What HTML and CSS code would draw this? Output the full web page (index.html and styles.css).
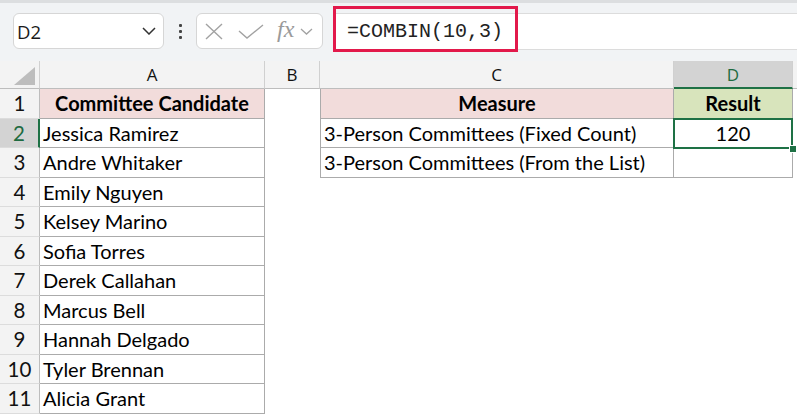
FILE: index.html
```html
<!DOCTYPE html>
<html>
<head>
<meta charset="utf-8">
<link rel="stylesheet" href="styles.css">
</head>
<body>
<div class="toolbar">
  <div class="namebox">
    <span class="nb-text">D2</span>
    <svg class="nb-chev" width="14" height="8" viewBox="0 0 14 8"><polyline points="1,1 7,7 13,1" fill="none" stroke="#333" stroke-width="1.5"/></svg>
  </div>
  <div class="vdots"><i></i><i></i><i></i></div>
  <div class="fbtns">
    <svg width="18" height="17" viewBox="0 0 18 17"><path d="M1 1 L17 16 M17 1 L1 16" stroke="#a2a2a2" stroke-width="1.4" fill="none"/></svg>
    <svg width="26" height="15" viewBox="0 0 26 15"><polyline points="1,7 9,14 25,1" fill="none" stroke="#a2a2a2" stroke-width="1.4"/></svg>
    <span class="fx">fx</span>
    <svg width="13" height="7" viewBox="0 0 13 7"><polyline points="1,1 6.5,6 12,1" fill="none" stroke="#a2a2a2" stroke-width="1.3"/></svg>
  </div>
  <div class="formula">
    <span class="ftext">=COMBIN(10,3)</span>
    <div class="hl"></div>
  </div>
</div>
<div class="sheet">
  <div class="ch corner"><svg width="21" height="18" viewBox="0 0 21 18"><polygon points="21,0 21,18 0,18" fill="#bdbdbd"/></svg></div>
  <div class="ch">A</div>
  <div class="ch">B</div>
  <div class="ch">C</div>
  <div class="ch sel">D</div>
  <div class="ch last"></div>

  <div class="rh">1</div>
  <div class="c bA hdrA b">Committee Candidate</div>
  <div class="c"></div>
  <div class="c bC hdrA b ctr">Measure</div>
  <div class="c bD hdrD b ctr">Result</div>
  <div class="c"></div>

  <div class="rh rsel">2</div>
  <div class="c bA">Jessica Ramirez</div>
  <div class="c"></div>
  <div class="c bC">3-Person Committees (Fixed Count)</div>
  <div class="c bD ctr active">120<span class="handle"></span></div>
  <div class="c"></div>

  <div class="rh">3</div>
  <div class="c bA">Andre Whitaker</div>
  <div class="c"></div>
  <div class="c bC">3-Person Committees (From the List)</div>
  <div class="c bD"></div>
  <div class="c"></div>

  <div class="rh">4</div><div class="c bA">Emily Nguyen</div><div class="c span"></div>
  <div class="rh">5</div><div class="c bA">Kelsey Marino</div><div class="c span"></div>
  <div class="rh">6</div><div class="c bA">Sofia Torres</div><div class="c span"></div>
  <div class="rh">7</div><div class="c bA">Derek Callahan</div><div class="c span"></div>
  <div class="rh">8</div><div class="c bA">Marcus Bell</div><div class="c span"></div>
  <div class="rh">9</div><div class="c bA">Hannah Delgado</div><div class="c span"></div>
  <div class="rh">10</div><div class="c bA">Tyler Brennan</div><div class="c span"></div>
  <div class="rh">11</div><div class="c bA">Alicia Grant</div><div class="c span"></div>
</div>
</body>
</html>
```
FILE: styles.css
```css
* { box-sizing: border-box; }
html, body { margin: 0; padding: 0; }
body {
  width: 797px;
  height: 416px;
  overflow: hidden;
  background: #ffffff;
  font-family: "Lato", "Liberation Sans", sans-serif;
}
.toolbar {
  height: 61px;
  background: #f1f3f5;
  border-top: 3px solid #dcdee0;
  display: flex;
  align-items: flex-start;
  padding: 10px 0 0 13px;
}
.namebox {
  width: 151px;
  height: 36px;
  background: #fff;
  border: 1px solid #d6d6d6;
  border-radius: 6px;
  display: flex;
  align-items: center;
  justify-content: space-between;
  padding: 0 7px 0 3px;
}
.nb-text {
  font-family: "Open Sans", sans-serif;
  font-size: 18.5px;
  color: #1a1a1a;
}
.vdots {
  width: 32px;
  height: 36px;
  display: flex;
  flex-direction: column;
  align-items: center;
  justify-content: center;
  gap: 3px;
}
.vdots i {
  display: block;
  width: 3px;
  height: 3px;
  background: #444;
  border-radius: 1px;
}
.fbtns {
  width: 127px;
  height: 36px;
  background: #fff;
  border: 1px solid #d6d6d6;
  border-radius: 6px;
  display: flex;
  align-items: center;
  padding: 0 3px 0 8px;
  gap: 0;
}
.fbtns svg:nth-child(1) { margin-right: 15px; }
.fbtns svg:nth-child(2) { margin-right: 13px; }
.fx {
  font-family: "Liberation Serif", serif;
  font-style: italic;
  font-size: 24px;
  color: #9a9a9a;
  margin-right: 6px;
  margin-top: -4px;
}
.formula {
  position: relative;
  flex: 1;
  margin-left: 10px;
  height: 37px;
  background: #fff;
  border: 1px solid #dcdcdc;
  border-right: none;
  display: flex;
  align-items: center;
  padding-left: 13px;
}
.ftext {
  font-family: "Liberation Mono", monospace;
  font-size: 20px;
  color: #222;
}
.hl {
  position: absolute;
  left: -1px;
  top: -8px;
  width: 185px;
  height: 46px;
  border: 3px solid #e2194b;
}
.sheet {
  display: grid;
  grid-template-columns: 40px 225px 55px 354px 119px 1fr;
  grid-template-rows: 28px repeat(11, 29.5px);
}
.ch {
  background: #f3f3f3;
  border-right: 1px solid #d0d0d0;
  border-bottom: 1px solid #bdbdbd;
  font-family: "Open Sans", sans-serif;
  font-size: 17px;
  color: #111;
  display: flex;
  align-items: center;
  justify-content: center;
}
.ch.corner { justify-content: flex-end; align-items: flex-end; padding: 0 4px 3px 0; }
.ch.sel {
  background: #d3d3d3;
  color: #1e6b41;
  border-bottom: 2px solid #1e7145;
}
.ch.last { border-right: none; }
.rh {
  background: #f3f3f3;
  border-right: 1px solid #bdbdbd;
  border-bottom: 1px solid #dcdcdc;
  font-family: "Lato", sans-serif;
  font-size: 20.5px;
  color: #111;
  display: flex;
  align-items: center;
  justify-content: center;
}
.rh.rsel {
  background: #d3d3d3;
  color: #1e6b41;
  border-right: 2px solid #1e7145;
}
.c {
  font-size: 20px;
  color: #000;
  display: flex;
  align-items: center;
  padding-left: 3px;
  white-space: nowrap;
}
.c.span { grid-column: 3 / 7; }
.bA { border-right: 1px solid #ababab; border-bottom: 1px solid #ababab; }
.bC { border-left: 1px solid #ababab; border-right: 1px solid #ababab; border-bottom: 1px solid #ababab; }
.bD { border-right: 1px solid #ababab; border-bottom: 1px solid #ababab; }
.hdrA { background: #f2dcdb; }
.hdrD { background: #d8e4bc; }
.b { font-weight: 700; justify-content: center; padding-left: 0; }
.ctr { justify-content: center; padding-left: 0; }
.active { position: relative; z-index: 3; }
.active::after {
  content: "";
  position: absolute;
  left: -1px;
  top: -1px;
  right: -1px;
  bottom: -2px;
  border: 2px solid #1e7145;
}
.handle {
  position: absolute;
  right: -5px;
  bottom: -6px;
  width: 8px;
  height: 8px;
  background: #1e7145;
  border: 1px solid #fff;
  z-index: 4;
}
```
